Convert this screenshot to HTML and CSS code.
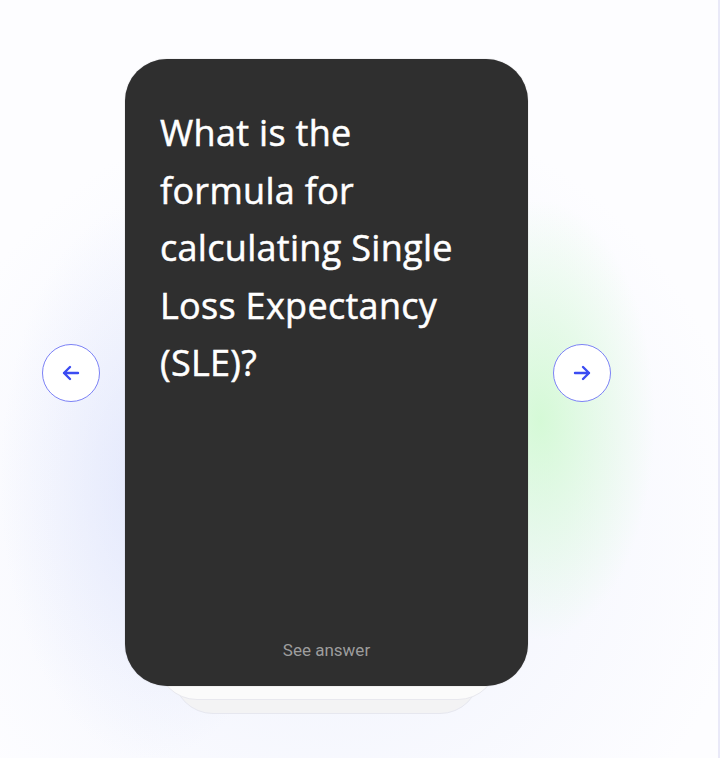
FILE: index.html
```html
<!DOCTYPE html>
<html>
<head>
<meta charset="utf-8">
<link rel="stylesheet" href="styles.css">
</head>
<body>
<div class="stage">
  <button class="nav" aria-label="Previous">
    <svg width="24" height="24" viewBox="0 0 24 24"><path d="M19 12H5M11 6l-6 6 6 6" fill="none" stroke="#3b4cf2" stroke-width="2.4" stroke-linecap="round" stroke-linejoin="round"/></svg>
  </button>
  <div class="deck">
    <div class="card">
      <p class="question">What is the formula for calculating Single Loss Expectancy (SLE)?</p>
      <p class="hint">See answer</p>
    </div>
  </div>
  <button class="nav" aria-label="Next">
    <svg width="24" height="24" viewBox="0 0 24 24"><path d="M5 12h14M13 6l6 6-6 6" fill="none" stroke="#3b4cf2" stroke-width="2.4" stroke-linecap="round" stroke-linejoin="round"/></svg>
  </button>
</div>
</body>
</html>
```
FILE: styles.css
```css
html, body {
  margin: 0;
  height: 100%;
}
body {
  background:
    radial-gradient(ellipse 150px 280px at 150px 480px, rgba(205, 214, 250, 0.45), rgba(220, 226, 252, 0) 100%),
    radial-gradient(ellipse 115px 220px at 540px 420px, rgba(205, 250, 205, 0.8), rgba(220, 252, 220, 0) 100%),
    radial-gradient(ellipse 420px 420px at 330px 520px, rgba(234, 238, 252, 0.75), rgba(255, 255, 255, 0) 100%),
    #fdfdff;
  border-right: 2px solid #e9e9f8;
  box-sizing: border-box;
  overflow: hidden;
  font-family: "Roboto", sans-serif;
}
.stage {
  display: flex;
  align-items: center;
  gap: 25px;
  padding: 59px 0 0 42px;
}
.nav {
  width: 58px;
  height: 58px;
  border-radius: 50%;
  border: 1px solid #7c82f6;
  background: #ffffff;
  display: flex;
  align-items: center;
  justify-content: center;
  padding: 0;
}
.deck {
  position: relative;
  width: 403px;
  height: 627px;
}
.deck::before,
.deck::after {
  content: "";
  position: absolute;
  border-radius: 0 0 40px 40px;
}
.deck::after {
  left: 48px;
  right: 48px;
  top: 200px;
  bottom: -28px;
  background: #f3f3f4;
  border: 1px solid #e6e7ef;
}
.deck::before {
  left: 32px;
  right: 30px;
  top: 200px;
  bottom: -14px;
  background: #fbfbfb;
  border: 1px solid #e8e8ee;
  z-index: 1;
}
.card {
  position: relative;
  z-index: 2;
  box-sizing: border-box;
  height: 100%;
  background: #2f2f2f;
  border-radius: 42px;
  padding: 45px 0 26px 0;
  display: flex;
  flex-direction: column;
  justify-content: space-between;
  box-shadow: 0 0 1px rgba(0,0,0,0.4);
}
.question {
  margin: 0 56px 0 35px;
  color: #ffffff;
  font-family: "Open Sans", sans-serif;
  font-size: 36px;
  line-height: 57.5px;
  font-weight: 400;
  letter-spacing: 0.3px;
  -webkit-text-stroke: 0.5px #ffffff;
}
.hint {
  margin: 0;
  text-align: center;
  color: #9d9d9d;
  font-family: "Roboto", sans-serif;
  font-size: 17px;
  line-height: 20px;
}
```
